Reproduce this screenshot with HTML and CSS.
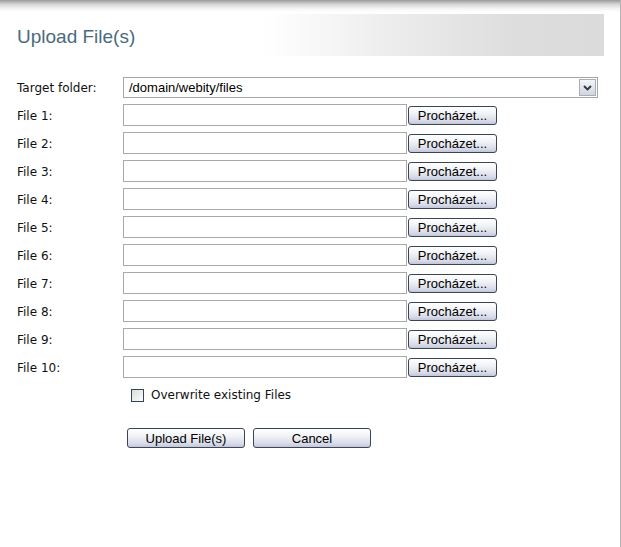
FILE: index.html
```html
<!DOCTYPE html>
<html>
<head>
<meta charset="utf-8">
<title>Upload File(s)</title>
<link rel="stylesheet" href="styles.css">
</head>
<body>
<div class="page">
  <div class="topshade"></div>
  <div class="header"><h1 class="title">Upload File(s)</h1></div>
  <form class="form">
    <label class="lbl">Target folder:</label>
    <div class="select">
      <span class="select-text">/domain/webity/files</span>
      <span class="select-btn"><svg width="9" height="6" viewBox="0 0 9 6"><path d="M1 1 L4.5 4.5 L8 1" fill="none" stroke="#2e3440" stroke-width="1.8"/></svg></span>
    </div>

    <label class="lbl">File 1:</label>
    <div class="filerow"><input class="file" type="text"><button type="button" class="btn browse">Procházet...</button></div>
    <label class="lbl">File 2:</label>
    <div class="filerow"><input class="file" type="text"><button type="button" class="btn browse">Procházet...</button></div>
    <label class="lbl">File 3:</label>
    <div class="filerow"><input class="file" type="text"><button type="button" class="btn browse">Procházet...</button></div>
    <label class="lbl">File 4:</label>
    <div class="filerow"><input class="file" type="text"><button type="button" class="btn browse">Procházet...</button></div>
    <label class="lbl">File 5:</label>
    <div class="filerow"><input class="file" type="text"><button type="button" class="btn browse">Procházet...</button></div>
    <label class="lbl">File 6:</label>
    <div class="filerow"><input class="file" type="text"><button type="button" class="btn browse">Procházet...</button></div>
    <label class="lbl">File 7:</label>
    <div class="filerow"><input class="file" type="text"><button type="button" class="btn browse">Procházet...</button></div>
    <label class="lbl">File 8:</label>
    <div class="filerow"><input class="file" type="text"><button type="button" class="btn browse">Procházet...</button></div>
    <label class="lbl">File 9:</label>
    <div class="filerow"><input class="file" type="text"><button type="button" class="btn browse">Procházet...</button></div>
    <label class="lbl">File 10:</label>
    <div class="filerow"><input class="file" type="text"><button type="button" class="btn browse">Procházet...</button></div>

    <div class="empty"></div>
    <label class="check"><span class="box"></span><span class="check-text">Overwrite existing Files</span></label>

    <div class="empty"></div>
    <div class="actions">
      <button type="button" class="btn action">Upload File(s)</button>
      <button type="button" class="btn action">Cancel</button>
    </div>
  </form>
</div>
</body>
</html>
```
FILE: styles.css
```css
html, body {
  margin: 0;
  padding: 0;
  background: #fff;
}
.page {
  width: 620px;
  height: 547px;
  border-right: 1px solid #b4b4b4;
  position: relative;
  background: #fff;
}
.topshade {
  height: 12px;
  background: linear-gradient(to bottom, #9a9a9a 0%, #d4d4d4 35%, #f6f6f6 75%, #ffffff 100%);
}
.header {
  margin: 2px 16px 0 17px;
  height: 42px;
  background: linear-gradient(to right, #ffffff 0%, #ffffff 42%, #eeeeee 62%, #dddddd 85%, #dbdbdb 100%);
  display: flex;
  align-items: center;
}
.title {
  margin: 0;
  padding-top: 4px;
  font-family: "Liberation Sans", Arial, sans-serif;
  font-weight: normal;
  font-size: 19px;
  color: #4a6b7c;
}
.form {
  margin: 21px 0 0 17px;
  display: grid;
  grid-template-columns: 106px 475px;
  row-gap: 6px;
  align-items: center;
}
.lbl {
  font-family: "DejaVu Sans", sans-serif;
  font-size: 12px;
  color: #111;
  padding-top: 1px;
}
.select {
  height: 21px;
  box-sizing: border-box;
  border: 1px solid #a6a6a6;
  display: flex;
  align-items: center;
  justify-content: space-between;
  padding: 0 1px 0 5px;
}
.select-text {
  font-family: "Liberation Sans", Arial, sans-serif;
  font-size: 13px;
  color: #000;
}
.select-btn {
  width: 15px;
  height: 15px;
  border: 1px solid #a9adb6;
  background: linear-gradient(to bottom, #f4f5f8, #d2d5e0);
  display: flex;
  align-items: center;
  justify-content: center;
}
.filerow {
  display: flex;
  align-items: center;
  gap: 1px;
  height: 22px;
}
.file {
  width: 284px;
  height: 22px;
  box-sizing: border-box;
  border: 1px solid #a9a9a9;
  margin: 0;
  padding: 0 3px;
  font-family: "Liberation Sans", Arial, sans-serif;
  font-size: 13px;
}
.btn {
  box-sizing: border-box;
  margin: 0;
  padding: 0;
  border: 1px solid #3a4658;
  border-radius: 3px;
  background: linear-gradient(to bottom, #ffffff 0%, #f1f2f6 40%, #d9dce8 80%, #c3c6d8 100%);
  font-family: "Liberation Sans", Arial, sans-serif;
  font-size: 13px;
  color: #000;
  line-height: 1;
}
.browse {
  width: 89px;
  height: 19px;
}
.check {
  display: flex;
  align-items: center;
  gap: 7px;
  margin: 1px 0 0 8px;
  height: 20px;
}
.box {
  width: 13px;
  height: 13px;
  box-sizing: border-box;
  border: 1px solid #33445e;
  background: linear-gradient(135deg, #dcdcd7 0%, #f3f3f0 70%, #ffffff 100%);
}
.check-text {
  font-family: "DejaVu Sans", sans-serif;
  font-size: 12px;
  color: #111;
}
.actions {
  display: flex;
  gap: 8px;
  margin: 17px 0 0 4px;
}
.action {
  width: 118px;
  height: 20px;
}
```
